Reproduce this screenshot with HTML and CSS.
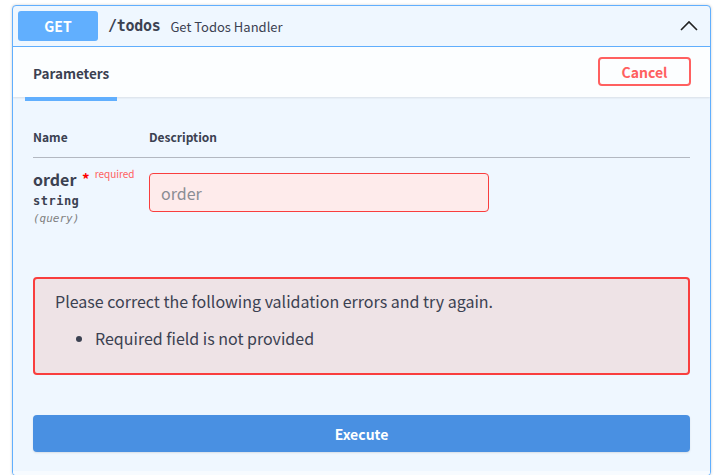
FILE: index.html
```html
<!DOCTYPE html>
<html>
<head>
<meta charset="utf-8">
<link rel="stylesheet" href="styles.css">
</head>
<body>
<div class="opblock">
  <div class="summary">
    <span class="method">GET</span>
    <span class="path">/todos</span>
    <span class="desc">Get Todos Handler</span>
    <svg class="chev" width="20" height="20" viewBox="0 0 20 20"><path d="M2 14 L10 6 L18 14" fill="none" stroke="#222" stroke-width="1.6"/></svg>
  </div>
  <div class="tabs">
    <div class="tab"><span>Parameters</span></div>
    <button class="cancel">Cancel</button>
  </div>
  <div class="body">
    <div class="table">
      <div class="thead">
        <div class="col-name">Name</div>
        <div class="col-desc">Description</div>
      </div>
      <div class="row">
        <div class="col-name">
          <div class="pname">order <span class="star">*</span><span class="req">required</span></div>
          <div class="ptype">string</div>
          <div class="pin">(query)</div>
        </div>
        <div class="col-desc">
          <input class="field" placeholder="order">
        </div>
      </div>
    </div>
    <div class="errors">
      <div class="err-title">Please correct the following validation errors and try again.</div>
      <ul class="err-list"><li>Required field is not provided</li></ul>
    </div>
    <button class="execute">Execute</button>
  </div>
  <div class="foot"></div>
</div>
</body>
</html>
```
FILE: styles.css
```css
* { box-sizing: border-box; }
body {
  margin: 0;
  background: #fff;
  font-family: "Noto Sans CJK KR", "Noto Sans", sans-serif;
  color: #3b4151;
}
.opblock {
  margin: 5px 0 0 12px;
  width: 699px;
  border: 1px solid #61affe;
  border-radius: 4px;
  background: #eff7ff;
  box-shadow: 0 0 3px rgba(0,0,0,.19);
  overflow: hidden;
}
.summary {
  display: flex;
  align-items: center;
  padding: 5px;
  border-bottom: 1px solid #61affe;
}
.method {
  width: 80px;
  height: 30px;
  border-radius: 3px;
  background: #61affe;
  color: #fff;
  font-weight: 700;
  font-size: 14px;
  display: flex;
  align-items: center;
  justify-content: center;
}
.path {
  font-family: "DejaVu Sans Mono", monospace;
  font-size: 15px;
  font-weight: 600;
  margin-left: 10px;
  letter-spacing: -0.3px;
}
.desc {
  font-size: 13px;
  margin-left: 10px;
}
.chev { margin-left: auto; margin-right: 6px; }
.tabs {
  height: 50px;
  display: flex;
  align-items: stretch;
  justify-content: space-between;
  padding: 0 19px 0 20px;
  background: rgba(255,255,255,.8);
  box-shadow: 0 1px 2px rgba(0,0,0,.1);
}
.tab {
  position: relative;
  display: flex;
  align-items: center;
  font-size: 13.5px;
  font-weight: 700;
  padding-top: 2px;
}
.tab span { position: relative; display: block; line-height: 20px; }
.tab span::after {
  content: "";
  position: absolute;
  left: -10%;
  width: 120%;
  height: 4px;
  bottom: -18px;
  background: #61affe;
}
.cancel {
  align-self: center;
  margin-top: -1px;
  width: 93px;
  height: 29px;
  border: 2px solid #ff6060;
  border-radius: 4px;
  background: transparent;
  color: #ff6060;
  font-family: inherit;
  font-weight: 700;
  font-size: 14px;
  padding: 0;
}
.body { padding: 20px 20px 0 20px; }
.thead {
  display: flex;
  padding: 12px 0;
  font-size: 12px;
  font-weight: 700;
  line-height: 16px;
  border-bottom: 1px solid #b3b8c1;
}
.col-name { width: 116px; flex: none; }
.col-desc { flex: 1; }
.row { display: flex; padding: 10px 0; }
.pname { font-size: 16px; font-weight: 700; line-height: 24px; margin-top: -1px; }
.star { color: #f00; font-size: 15px; position: relative; top: -1px; margin-left: 2px; }
.req { color: #ff6060; font-size: 10px; font-weight: 400; position: relative; top: -8px; margin-left: 5px; }
.ptype { font-family: "DejaVu Sans Mono", monospace; font-size: 12px; font-weight: 700; line-height: 16px; margin-top: -1px; letter-spacing: 0.5px; }
.pin { font-family: "DejaVu Sans Mono", monospace; font-size: 11px; font-style: italic; color: #808080; line-height: 16px; margin-top: 2px; }
.field {
  display: block;
  margin-top: 5px;
  width: 340px;
  height: 39px;
  border: 1px solid #f93e3e;
  border-radius: 4px;
  background: #feebeb;
  font-family: inherit;
  font-size: 16px;
  padding: 0 11px;
  color: #3b4151;
}
.field::placeholder { color: #8a8d94; }
.errors {
  margin-top: 40px;
  height: 98px;
  border: 2px solid #f93e3e;
  border-radius: 4px;
  background: #eee3e6;
  padding: 10px 20px;
  font-size: 16px;
  line-height: 24px;
}
.err-list { margin: 13px 0 0 0; padding-left: 40px; }
.execute {
  display: block;
  margin-top: 40px;
  width: 100%;
  height: 37px;
  border: none;
  border-radius: 4px;
  background: #4990e2;
  color: #fff;
  font-family: inherit;
  font-weight: 700;
  font-size: 14px;
  box-shadow: 0 1px 2px rgba(0,0,0,.1);
}
.foot { height: 4px; margin-top: 19px; background: #f7fbff; }
```
